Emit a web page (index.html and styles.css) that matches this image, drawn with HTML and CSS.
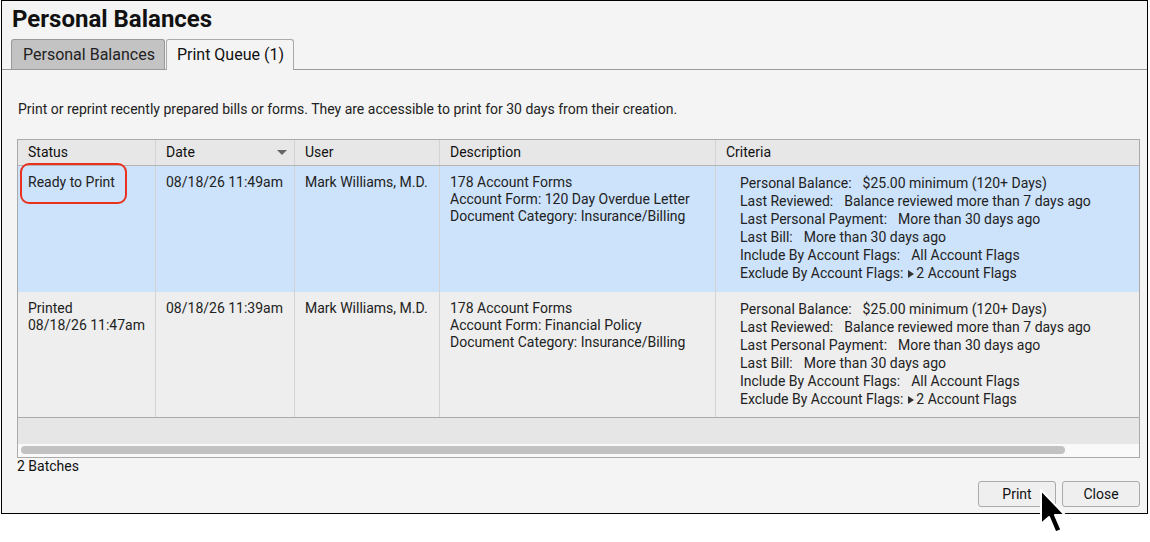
FILE: index.html
```html
<!DOCTYPE html>
<html lang="en">
<head>
    <meta charset="UTF-8">
    <title>Personal Balances</title>
    <link rel="stylesheet" href="styles.css">
</head>
<body>

    <div class="window">
        <h1 class="title">Personal Balances</h1>

        <div class="tabs">
            <div class="tab">Personal Balances</div>
            <div class="tab active">Print Queue (1)</div>
        </div>

        <div class="panel">
            <p class="intro">Print or reprint recently prepared bills or forms. They are accessible to print for 30 days from their creation.</p>

            <!-- Print queue grid -->
            <div class="grid">
                <div class="row head">
                    <div class="cell">Status</div>
                    <div class="cell sortable">Date <span class="sort-arrow"></span></div>
                    <div class="cell">User</div>
                    <div class="cell">Description</div>
                    <div class="cell">Criteria</div>
                </div>

                <div class="row selected">
                    <div class="cell status"><span class="ready">Ready to Print</span></div>
                    <div class="cell">08/18/26 11:49am</div>
                    <div class="cell">Mark Williams, M.D.</div>
                    <div class="cell desc">
                        <div>178 Account Forms</div>
                        <div>Account Form: 120 Day Overdue Letter</div>
                        <div>Document Category: Insurance/Billing</div>
                    </div>
                    <div class="cell criteria">
                        <div><span class="label">Personal Balance:</span>$25.00 minimum (120+ Days)</div>
                        <div><span class="label">Last Reviewed:</span>Balance reviewed more than 7 days ago</div>
                        <div><span class="label">Last Personal Payment:</span>More than 30 days ago</div>
                        <div><span class="label">Last Bill:</span>More than 30 days ago</div>
                        <div><span class="label">Include By Account Flags:</span>All Account Flags</div>
                        <div><span class="label short">Exclude By Account Flags:</span><span class="expand"></span>2 Account Flags</div>
                    </div>
                </div>

                <div class="row">
                    <div class="cell status">Printed<br>08/18/26 11:47am</div>
                    <div class="cell">08/18/26 11:39am</div>
                    <div class="cell">Mark Williams, M.D.</div>
                    <div class="cell desc">
                        <div>178 Account Forms</div>
                        <div>Account Form: Financial Policy</div>
                        <div>Document Category: Insurance/Billing</div>
                    </div>
                    <div class="cell criteria">
                        <div><span class="label">Personal Balance:</span>$25.00 minimum (120+ Days)</div>
                        <div><span class="label">Last Reviewed:</span>Balance reviewed more than 7 days ago</div>
                        <div><span class="label">Last Personal Payment:</span>More than 30 days ago</div>
                        <div><span class="label">Last Bill:</span>More than 30 days ago</div>
                        <div><span class="label">Include By Account Flags:</span>All Account Flags</div>
                        <div><span class="label short">Exclude By Account Flags:</span><span class="expand"></span>2 Account Flags</div>
                    </div>
                </div>

                <div class="filler"></div>
                <div class="hscroll"><div class="thumb"></div></div>
            </div>

            <div class="count">2 Batches</div>

            <div class="actions">
                <button type="button">Print</button>
                <button type="button">Close</button>
            </div>
        </div>
    </div>

    <!-- mouse pointer over the Print button -->
    <svg class="pointer" width="32" height="54" viewBox="0 0 32 54">
        <path d="M3 3 L3 37 L11 30 L17.5 45.5 L23.5 43 L17 28 L27 28 Z"
              fill="#000" stroke="#fff" stroke-width="2" stroke-linejoin="round"/>
    </svg>

</body>
</html>
```

FILE: styles.css
```css
*, *::before, *::after {
    box-sizing: border-box;
}
body {
    margin: 0;
    background: #fff;
    font-family: Roboto, 'Liberation Sans', sans-serif;
    color: #222;
    position: relative;
    width: 1150px;
    height: 542px;
    overflow: hidden;
}
.window {
    margin-left: 1px;
    width: 1147px;
    height: 514px;
    border: 1px solid #000;
    background: #f4f4f4;
    display: flex;
    flex-direction: column;
}
.title {
    margin: 0;
    padding: 3px 0 0 10px;
    height: 38px;
    font-size: 24px;
    line-height: 30px;
    font-weight: bold;
    color: #111;
}
.tabs {
    display: flex;
    gap: 1px;
    padding-left: 9px;
    border-bottom: 1px solid #999;
    height: 31px;
}
.tab {
    height: 30px;
    padding: 0 9px 0 11px;
    line-height: 29px;
    font-size: 16px;
    border: 1px solid #999;
    border-bottom: none;
    border-radius: 3px 3px 0 0;
    background: #c3c3c3;
    color: #222;
}
.tab.active {
    background: #f4f4f4;
    height: 31px;
    margin-bottom: -1px;
    padding: 0 9px 0 10px;
    border-color: #aaa;
    color: #111;
}
.panel {
    flex: 1;
    padding: 0 7px 0 15px;
    display: flex;
    flex-direction: column;
}
.intro {
    margin: 31px 0 21px 1px;
    font-size: 14px;
    line-height: 17px;
    color: #222;
}
.grid {
    border: 1px solid #aaa;
    background: #f9f9f9;
    font-size: 14px;
}
.row {
    display: grid;
    grid-template-columns: 138px 139px 145px 276px 1fr;
    height: 126px;
    background: #eeeeee;
    border-bottom: 1px solid #aaa;
}
.row.selected {
    background: #cde3fc;
    border-bottom: none;
}
.row.head {
    height: 26px;
    background: #e7e7e7;
    border-bottom: 1px solid #b5b5b5;
}
.cell {
    border-right: 1px solid #d3d3d3;
    padding: 8px 10px 0 10px;
    line-height: 17px;
}
.cell:last-child {
    border-right: none;
}
.head .cell {
    padding-top: 4px;
    color: #111;
}
.sortable {
    display: flex;
    justify-content: space-between;
    align-items: center;
    padding-bottom: 4px;
    padding-right: 7px;
}
.sort-arrow {
    width: 0;
    height: 0;
    border-left: 5px solid transparent;
    border-right: 5px solid transparent;
    border-top: 5px solid #666;
}
.status {
    position: relative;
}
/* red callout drawn around the ready status */
.ready::after {
    content: "";
    position: absolute;
    left: 2px;
    top: -3px;
    width: 107px;
    height: 41px;
    border: 2.5px solid #e8321e;
    border-radius: 9px;
}
.criteria {
    padding-left: 24px;
    padding-top: 8px;
    line-height: 18px;
}
.label {
    margin-right: 11px;
}
.label.short {
    margin-right: 5px;
}
.expand {
    display: inline-block;
    width: 0;
    height: 0;
    border-top: 4.5px solid transparent;
    border-bottom: 4.5px solid transparent;
    border-left: 6px solid #333;
    margin-right: 2px;
}
.filler {
    height: 26px;
    background: #e6e6e6;
}
.hscroll {
    height: 13px;
    padding: 2px 0 0 3px;
    background: #f9f9f9;
}
.thumb {
    width: 1044px;
    height: 8px;
    border-radius: 4px;
    background: #c2c2c2;
}
.count {
    font-size: 14px;
    line-height: 17px;
    color: #111;
}
.actions {
    display: flex;
    justify-content: flex-end;
    gap: 6px;
    margin-top: 6px;
}
button {
    width: 78px;
    height: 26px;
    font-family: Roboto, 'Liberation Sans', sans-serif;
    font-size: 14px;
    color: #111;
    background: #efefef;
    border: 1px solid #aaa;
    border-radius: 3px;
}
.pointer {
    position: absolute;
    left: 1038px;
    top: 487px;
}
```
